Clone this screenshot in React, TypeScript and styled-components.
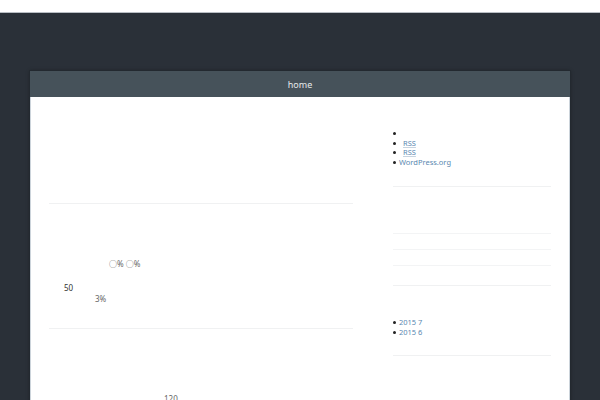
import React from "react";
import styled, { createGlobalStyle } from "styled-components";

const GlobalStyle = createGlobalStyle`
  html, body {
    margin: 0;
    padding: 0;
    background: #ffffff;
    font-family: "Noto Sans", "Noto Sans CJK KR", sans-serif;
  }
  * {
    box-sizing: border-box;
  }
`;

export const TopStrip = styled.div`
  height: 13px;
  background: #ffffff;
  border-bottom: 1px solid #b9bec4;
`;

export const Backdrop = styled.div`
  background: #2a3038;
  padding: 58px 30px 0;
  height: 387px;
  overflow: hidden;
`;

export const Container = styled.div`
  background: #ffffff;
  box-shadow: 0 0 0 1px #232930, 0 0 4px rgba(0, 0, 0, 0.4);
  min-height: 400px;
`;

export const NavBar = styled.nav`
  height: 26px;
  background: #46525a;
  color: #e4e8ea;
  font-size: 9px;
  display: flex;
  align-items: center;
  justify-content: center;
`;

export const Body = styled.div`
  display: flex;
  gap: 40px;
  padding: 0 18px;
  border-left: 1px solid #ccd4db;
  border-right: 1px solid #ccd4db;
  min-height: 320px;
`;

export const MainColumn = styled.main`
  width: 304px;
  display: flex;
  flex-direction: column;
`;

export const Sidebar = styled.aside`
  width: 158px;
  display: flex;
  flex-direction: column;
`;

export const Post = styled.article<{ $height: number; $pad?: number }>`
  height: ${(p) => p.$height}px;
  padding-top: ${(p) => p.$pad || 0}px;
  border-bottom: 1px solid #f0f1f2;
`;

export const PostLine = styled.p<{ $indent: number; $top: number; $dark?: boolean }>`
  margin: ${(p) => p.$top}px 0 0 ${(p) => p.$indent}px;
  font-size: 8px;
  line-height: 11px;
  color: ${(p) => (p.$dark ? "#333" : "#666")};
`;

export const Widget = styled.section<{ $pad: number; $height: number }>`
  padding-top: ${(p) => p.$pad}px;
  height: ${(p) => p.$height}px;
  border-bottom: 1px solid #f0f1f2;
`;

export const WidgetList = styled.ul`
  list-style: none;
  margin: 0;
  padding: 0;
`;

export const WidgetItem = styled.li<{ $shift?: number }>`
  display: flex;
  align-items: center;
  gap: 3px;
  height: 9.5px;
  font-size: 7.5px;
  line-height: 9.5px;
  &::before {
    content: "";
    width: 3px;
    height: 3px;
    border-radius: 50%;
    background: #222;
    margin-right: ${(p) => p.$shift || 0}px;
  }
`;

export const WidgetLink = styled.a<{ $underline?: boolean }>`
  color: #5a88b0;
  text-decoration: ${(p) => (p.$underline ? "underline" : "none")};
  text-decoration-color: #c7d4e0;
`;

export const LinedList = styled.ul`
  list-style: none;
  margin: 0;
  padding: 0;
`;

export const LinedItem = styled.li`
  height: 16px;
  border-bottom: 1px solid #f3f4f5;
`;

export default function App() {
  return (
    <>
      <GlobalStyle />
      <TopStrip />
      <Backdrop>
        <Container>
          <NavBar>home</NavBar>
          <Body>
            <MainColumn>
              <Post $height={107} />
              <Post $height={125} $pad={54}>
                <PostLine $indent={60} $top={0}>○% ○%</PostLine>
                <PostLine $indent={15} $top={13} $dark>
                  50
                </PostLine>
                <PostLine $indent={46} $top={0}>3%</PostLine>
              </Post>
              <Post $height={100} $pad={64}>
                <PostLine $indent={115} $top={0}>120</PostLine>
              </Post>
            </MainColumn>
            <Sidebar>
              <Widget $pad={32} $height={90}>
                <WidgetList>
                  <WidgetItem />
                  <WidgetItem $shift={4}>
                    <WidgetLink $underline>RSS</WidgetLink>
                  </WidgetItem>
                  <WidgetItem $shift={4}>
                    <WidgetLink $underline>RSS</WidgetLink>
                  </WidgetItem>
                  <WidgetItem>
                    <WidgetLink>WordPress.org</WidgetLink>
                  </WidgetItem>
                </WidgetList>
              </Widget>
              <Widget $pad={31} $height={99}>
                <LinedList>
                  <LinedItem />
                  <LinedItem />
                  <LinedItem />
                </LinedList>
              </Widget>
              <Widget $pad={32} $height={70}>
                <WidgetList>
                  <WidgetItem>
                    <WidgetLink>2015 7</WidgetLink>
                  </WidgetItem>
                  <WidgetItem>
                    <WidgetLink>2015 6</WidgetLink>
                  </WidgetItem>
                </WidgetList>
              </Widget>
            </Sidebar>
          </Body>
        </Container>
      </Backdrop>
    </>
  );
}
